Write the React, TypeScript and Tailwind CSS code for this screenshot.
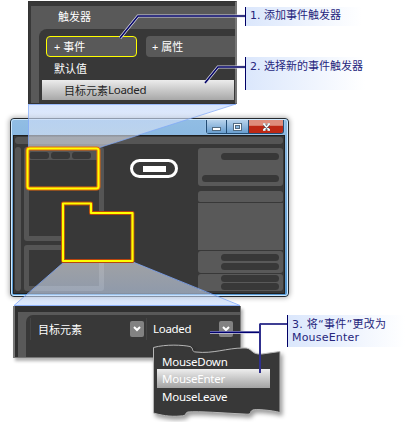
import React from 'react';

const song = "font-['Noto_Sans','Noto_Sans_CJK_SC',sans-serif]";
const verdana = "font-['DejaVu_Sans','Noto_Sans_CJK_SC',sans-serif]";

function TriggerPanel() {
  return (
    <section className={`absolute left-[28px] top-px h-[103px] w-[209px] overflow-hidden border border-r-2 border-[#333] border-r-[#777] bg-[#383838] pl-[2px] pt-[4px] text-[11px] text-white ${song}`}>
      <div className="h-full bg-[#595959] pl-[8px]">
        <h2 className="h-[23px] pl-[19px] pt-[2px] leading-[18px]">触发器</h2>
        <div className="h-[76px] rounded-tl-[8px] bg-[#383838] pt-[7px]">
          <div className="flex gap-[9px] pl-[7px]">
            <button className="flex h-[21px] w-[91px] shrink-0 items-center rounded-[4px] border border-[#ffff00] bg-[#595959] pl-[7px] text-left text-[11px] leading-none whitespace-pre">+ 事件</button>
            <button className="flex h-[21px] w-[92px] shrink-0 items-center rounded-[4px] bg-[#595959] pl-[6px] text-left text-[11px] leading-none whitespace-pre">+ 属性</button>
          </div>
          <p className="h-[23px] pl-[15px] pt-[3px] leading-[18px]">默认值</p>
          <p className="ml-[3px] flex h-[20px] w-[192px] items-center bg-linear-to-b from-[#ececec] to-[#a8a8a8] pl-[22px] text-[11px] leading-none text-[#252525]">目标元素<span className="text-[11.5px] tracking-[-0.3px]">Loaded</span></p>
        </div>
      </div>
    </section>
  );
}

function Pill({ wide = false }: { wide?: boolean }) {
  return <div className={`h-[7px] rounded-full bg-[#383838] ${wide ? 'w-[77px]' : 'w-[58px]'}`} />;
}

function AppWindow() {
  return (
    <section className="absolute left-[10px] top-[118px] h-[179px] w-[279px] rounded-[4px] border border-[#25292d] bg-[#62aee7] shadow-[0_0_5px_1px_rgba(0,0,0,0.3)]">
      <div className="flex h-full flex-col rounded-[3px] border border-[#cce8ff] bg-linear-to-b from-[#91bde4] to-[#5597d0] pl-px pr-[2px] pb-px">
        <header className="-mr-px flex h-[15px] shrink-0 justify-end pr-[2px]">
          <div className="flex h-[14px] w-[78px] rounded-b-[3px] border border-t-0 border-[#244d74] shadow-[0_0_1px_#fff]">
            <div className="flex w-[20px] items-end justify-center border-r border-[#244d74] bg-linear-to-b from-[#b8d3ec] to-[#679dce] pb-[2px]">
              <i className="h-[4px] w-[9px] border border-[#536b80] bg-white" />
            </div>
            <div className="flex w-[22px] items-center justify-center border-r border-[#244d74] bg-linear-to-b from-[#b8d3ec] to-[#679dce]">
              <i className="h-[8px] w-[9px] border border-[#536b80] bg-white p-px"><b className="block h-full border border-[#536b80] bg-[#8cb8df]" /></i>
            </div>
            <div className="flex flex-1 items-center justify-center rounded-br-[2px] bg-linear-to-b from-[#df8d7c] from-40% to-[#bd2814] to-50%">
              <svg width="9" height="8" viewBox="0 0 9 8"><path d="M2 1.5 7 6.5M7 1.5 2 6.5M1 1H3.5M5.5 1H8M1 7H3.5M5.5 7H8" stroke="#5b6670" strokeWidth="3" /><path d="M2 1.5 7 6.5M7 1.5 2 6.5M1 1H3.5M5.5 1H8M1 7H3.5M5.5 7H8" stroke="white" strokeWidth="1.4" /></svg>
            </div>
          </div>
        </header>
        <main className="min-h-0 flex-1 border border-[#202020] bg-[#383838] pl-px pt-px">
          <div className="h-[7px] w-[268px] rounded-[3px] bg-[#555]" />
          <div className="flex pt-[3px]">
            <div className="h-[144px] w-[6px] rounded-[3px] bg-[#555]" />
            <div className="ml-[3px] w-[80px]">
              <div className="h-[94px] rounded-[3px] border-[5px] border-[#555]">
                <div className="flex h-[8px] gap-[2px] bg-[#555]">
                  <i className="h-[7px] w-[20px] rounded-[3px] bg-[#383838]" />
                  <i className="h-[7px] w-[19px] rounded-[3px] bg-[#383838]" />
                  <i className="h-[7px] w-[19px] rounded-[3px] bg-[#383838]" />
                </div>
              </div>
              <div className="mt-[4px] h-[46px] rounded-[3px] border-[5px] border-[#555]" />
            </div>
            <div className="w-[94px] pl-[26px] pt-[12px]">
              <div className="flex h-[19px] w-[48px] items-center justify-center rounded-full border-[3px] border-white"><i className="h-[6px] w-[23px] bg-white" /></div>
            </div>
            <div className="flex w-[85px] flex-col gap-px pt-px">
              <div className="mb-[4px] flex h-[38px] flex-col items-end justify-between rounded-[3px] bg-[#595959] px-[4px] pb-[4px] pt-[5px]"><Pill /><Pill wide /></div>
              <div className="h-[11px] rounded-b-[2px] rounded-t-[3px] bg-[#595959]" />
              <div className="h-[47px] bg-[#595959]" />
              <div className="flex h-[22px] flex-col items-end gap-[2px] rounded-[3px] bg-[#595959] pr-[4px] pt-[3px]"><Pill /><Pill /></div>
              <div className="flex h-[17px] flex-col items-end gap-px rounded-[3px] bg-[#595959] pr-[4px] pt-px"><Pill /><Pill /></div>
            </div>
          </div>
        </main>
      </div>
    </section>
  );
}

function Highlights() {
  return (
    <svg className="absolute inset-0" width="407" height="422" fill="none">
      <defs>
        <linearGradient id="upper-beam" x2="0" y2="1"><stop stopColor="#c2d7fc" stopOpacity=".66" /><stop offset="1" stopColor="#e6e9ee" stopOpacity=".58" /></linearGradient>
        <linearGradient id="lower-beam" x2="0" y2="1"><stop stopColor="#edf1f7" stopOpacity=".57" /><stop offset="1" stopColor="#bed5fb" stopOpacity=".6" /></linearGradient>
      </defs>
      <path d="M28.5 104H236L98 148H28.5Z" fill="url(#upper-beam)" />
      <path d="M28.5 104V148M236 104 98 148M28.5 104.5H236" stroke="#7da6fa" strokeOpacity=".7" />
      <path d="M64 262H133L240 306H14Z" fill="url(#lower-beam)" />
      <path d="M64 262 14 305.5H240L133 262" stroke="#7da6fa" strokeOpacity=".8" />
      <g strokeLinejoin="round">
        <rect x="27.5" y="148.5" width="71" height="40" rx="2" stroke="#e5680d" strokeWidth="4" />
        <rect x="27.5" y="148.5" width="71" height="40" rx="2" stroke="#ffff00" strokeWidth="2" />
        <path d="M63 203.5H91V213H132.5V261H63Z" fill="#383838" stroke="#b8430d" strokeWidth="4" />
        <path d="M63 203.5H91V213H132.5V261H63Z" stroke="#ffff00" strokeWidth="2.2" />
      </g>
    </svg>
  );
}

function ComboArrow() {
  return <span className="flex h-[16px] w-[14px] shrink-0 items-center justify-center rounded-[2px] bg-[#828282]"><svg width="8" height="6" fill="none"><path d="m1 1 3 3 3-3" stroke="#fff" strokeWidth="2" /></svg></span>;
}

function TargetPanel() {
  return (
    <section className={`absolute left-[13px] top-[306px] h-[52px] w-[228px] border-l-2 border-r border-b border-[#777] bg-[#303030] pl-[3px] pt-[6px] text-white shadow-[2px_3px_3px_rgba(0,0,0,0.3)] ${song}`}>
      <div className="h-full bg-[#595959] pl-[8px] pt-[3px]">
        <div className="flex h-full rounded-tl-[7px] bg-[#383838] pl-[4px] pt-[3px]">
          <div className="flex h-[22px] w-[114px] items-center border-l border-[#454545] pl-[7px] text-[11px] leading-none"><span className="w-[92px]">目标元素</span><ComboArrow /></div>
          <div className="ml-[2px] flex h-[22px] items-center border-l border-[#454545] pl-[6px] text-[11.5px] leading-none tracking-[-0.3px]"><span className="w-[66px]">Loaded</span><ComboArrow /></div>
        </div>
      </div>
    </section>
  );
}

function EventMenu() {
  return (
    <section className="absolute left-[152px] top-[342px] h-[75px] w-[130px]">
      <svg className="absolute inset-0 overflow-visible drop-shadow-[2px_3px_2px_rgba(0,0,0,0.4)]" width="130" height="75">
        <path d="M1.5 5.5C14 2 31 3 38 4.5C42 6 39 10 44 10C61 12 75 6 91 6C101 5 98 13 110 12L128 9.5V70.5C119 68 103 67 101 68C96 70 102 73 92 72C71 71 47 69 36 70C32 71 36 74 28 74C18 75 8 73 1.5 71Z" fill="#383838" stroke="#b6b6b6" />
      </svg>
      <ul className={`relative pl-[5px] pt-[11px] text-[11.5px] leading-[17px] tracking-[-0.25px] text-white ${song}`}>
        <li className="h-[16px] w-[113px] pl-[5px]">MouseDown</li>
        <li className="h-[19px] w-[113px] bg-linear-to-b from-[#eee] to-[#a3a3a3] pl-[5px] pt-px">MouseEnter</li>
        <li className="h-[17px] w-[113px] pl-[5px]">MouseLeave</li>
      </ul>
    </section>
  );
}

export default function App() {
  return (
    <div className="relative h-[422px] w-[407px] overflow-hidden bg-white">
      <AppWindow />
      <TriggerPanel />
      <Highlights />
      <TargetPanel />
      <EventMenu />
      <svg className="absolute inset-0" width="407" height="422" fill="none">
        <path d="M245 16H138L120 38M245 67H218L205 83" stroke="#d2d2df" strokeWidth="3" />
        <path d="M245 16H138L120 38M245 67H218L205 83" stroke="#000066" strokeWidth="1.4" />
        <path d="M210 332.3H260" stroke="#c9c9e3" strokeWidth="2.8" />
        <path d="M210 332.3H260M260 324H288" stroke="#000070" strokeWidth="1.4" />
        <path d="M260 323.5V373" stroke="#30308d" strokeWidth="2" />
      </svg>
      <p className={`absolute left-[245px] top-[7px] h-[19px] w-[117px] border-l border-[#000066] bg-linear-to-r from-[#dbe7fc] to-white pl-[4px] text-[11px] leading-[17px] whitespace-pre text-[#26267c] ${verdana}`}>1. 添加事件触发器</p>
      <p className={`absolute left-[245px] top-[57px] h-[33px] w-[120px] border-l border-[#000066] bg-linear-to-r from-[#dbe7fc] to-white pl-[4px] text-[11px] leading-[20px] whitespace-pre text-[#26267c] ${verdana}`}>2. 选择新的事件触发器</p>
      <p className={`absolute left-[287px] top-[315px] h-[32px] w-[118px] border-l border-[#000066] bg-linear-to-r from-[#dbe7fc] to-white pl-[4px] pt-[3px] text-[11px] leading-[13px] whitespace-pre text-[#26267c] ${verdana}`}><span className="tracking-[0.25px]">3. 将“事件”更改为</span><br /><span className="tracking-[0.2px]">MouseEnter</span></p>
    </div>
  );
}
